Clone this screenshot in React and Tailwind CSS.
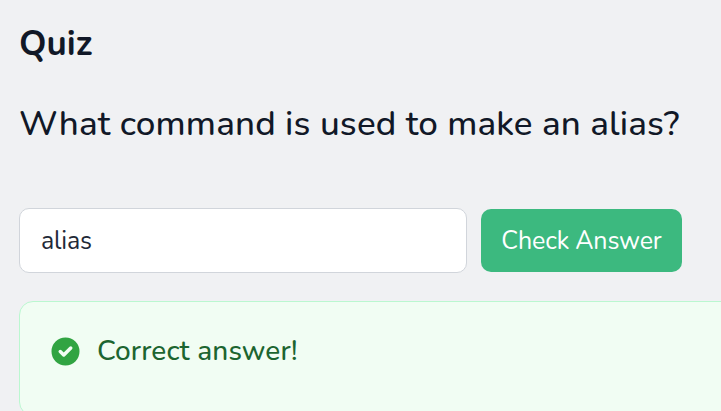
export default function App() {
  return (
    <main className="h-[411px] w-full overflow-hidden bg-[#f0f1f3] pl-[19px] font-['Nunito','Lato',sans-serif] text-[#111827]">
      <h1 className="pt-[22px] text-[35px] leading-[44px] font-bold">Quiz</h1>
      <h2 className="mt-[36px] text-[35px] leading-[44px] font-medium whitespace-nowrap tracking-[0.15px]">
        What command is used to make an alias?
      </h2>
      <form className="mt-[62px] flex items-center gap-[14px]" onSubmit={(e) => e.preventDefault()}>
        <input
          type="text"
          defaultValue="alias"
          className="h-[65px] w-[448px] rounded-[10px] border border-[#d1d5db] bg-white px-[21px] text-[25px] tracking-[-0.15px] text-[#1f2937] outline-none"
        />
        <button className="h-[63px] w-[201px] rounded-[10px] bg-[#3cb97f] pt-[2px] text-[25px] font-normal whitespace-nowrap tracking-[-0.15px] text-white">
          Check Answer
        </button>
      </form>
      <section className="mt-[28px] flex h-[115px] w-[740px] items-start rounded-[14px] border border-[#bbf7d0] bg-[#f1fdf3] pt-[32px] pl-[28px]">
        <svg viewBox="0 0 20 20" className="size-[35px] shrink-0 fill-[#31a442]">
          <path
            fillRule="evenodd"
            clipRule="evenodd"
            d="M10 18a8 8 0 100-16 8 8 0 000 16zm3.707-9.293a1 1 0 00-1.414-1.414L9 10.586 7.707 9.293a1 1 0 00-1.414 1.414l2 2a1 1 0 001.414 0l4-4z"
          />
        </svg>
        <p className="ml-[14px] text-[28px] leading-[35px] font-medium whitespace-nowrap tracking-[0.13px] text-[#1c6530]">Correct answer!</p>
      </section>
    </main>
  );
}
